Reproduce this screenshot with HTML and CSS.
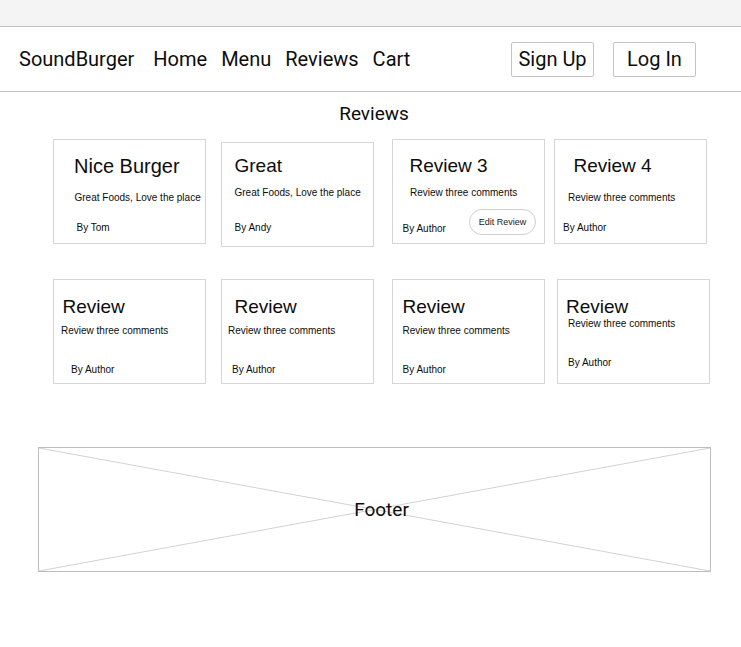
FILE: index.html
```html
<!DOCTYPE html>
<html lang="en">
<head>
<meta charset="utf-8">
<title>SoundBurger - Reviews</title>
<link rel="stylesheet" href="styles.css">
</head>
<body>
<div class="topbar"></div>
<header class="nav">
  <a class="brand" href="#">SoundBurger</a>
  <nav class="links">
    <a href="#">Home</a>
    <a href="#">Menu</a>
    <a href="#">Reviews</a>
    <a href="#">Cart</a>
  </nav>
  <div class="auth">
    <button class="btn">Sign Up</button>
    <button class="btn">Log In</button>
  </div>
</header>
<main>
  <h1 class="page-title">Reviews</h1>
  <section class="grid">
    <article class="card r1c1">
      <h2 class="card-title">Nice Burger</h2>
      <p class="card-text">Great Foods, Love the place</p>
      <div class="card-foot"><span>By Tom</span></div>
    </article>
    <article class="card r1c2">
      <h2 class="card-title">Great</h2>
      <p class="card-text">Great Foods, Love the place</p>
      <div class="card-foot"><span>By Andy</span></div>
    </article>
    <article class="card r1c3">
      <h2 class="card-title">Review 3</h2>
      <p class="card-text">Review three comments</p>
      <div class="card-foot"><span>By Author</span><button class="edit-btn">Edit Review</button></div>
    </article>
    <article class="card r1c4">
      <h2 class="card-title">Review 4</h2>
      <p class="card-text">Review three comments</p>
      <div class="card-foot"><span>By Author</span></div>
    </article>
    <article class="card r2c1">
      <h2 class="card-title">Review</h2>
      <p class="card-text">Review three comments</p>
      <div class="card-foot"><span>By Author</span></div>
    </article>
    <article class="card r2c2">
      <h2 class="card-title">Review</h2>
      <p class="card-text">Review three comments</p>
      <div class="card-foot"><span>By Author</span></div>
    </article>
    <article class="card r2c3">
      <h2 class="card-title">Review</h2>
      <p class="card-text">Review three comments</p>
      <div class="card-foot"><span>By Author</span></div>
    </article>
    <article class="card r2c4">
      <h2 class="card-title">Review</h2>
      <p class="card-text">Review three comments</p>
      <div class="card-foot"><span>By Author</span></div>
    </article>
  </section>
  <footer class="footer">
    <svg class="footer-x" viewBox="0 0 100 100" preserveAspectRatio="none" aria-hidden="true">
      <line x1="0" y1="0" x2="100" y2="100" vector-effect="non-scaling-stroke"/>
      <line x1="100" y1="0" x2="0" y2="100" vector-effect="non-scaling-stroke"/>
    </svg>
    <span class="footer-label">Footer</span>
  </footer>
</main>
</body>
</html>
```
FILE: styles.css
```css
body {
  margin: 0;
  font-family: Roboto, "Liberation Sans", sans-serif;
  color: #0d0d0d;
  background: #fff;
}

.topbar {
  height: 26px;
  background: #f4f4f4;
  border-bottom: 1px solid #c4c4c4;
}

.nav {
  height: 64px;
  display: flex;
  align-items: center;
  padding: 0 45px 0 19px;
  border-bottom: 1px solid #c4c4c4;
  font-size: 20px;
}

.brand,
.links a {
  color: inherit;
  text-decoration: none;
}

.brand {
  margin-right: 19px;
}

.links {
  display: flex;
  gap: 14px;
}

.auth {
  margin-left: auto;
  display: flex;
  gap: 19px;
}

.btn {
  width: 83px;
  height: 35px;
  padding: 0;
  font-family: Roboto, "Liberation Sans", sans-serif;
  font-size: 20px;
  color: #0d0d0d;
  background: #fff;
  border: 1px solid #c4c4c4;
  border-radius: 2px;
}

.page-title {
  margin: 10.5px 0 0;
  padding-left: 7px;
  font-size: 19px;
  line-height: 22px;
  font-weight: 400;
  text-align: center;
}

.grid {
  display: grid;
  grid-template-columns: 168px 171px 165px 153px;
  grid-auto-rows: 105px;
  row-gap: 35px;
  margin: 14.5px 0 0 53px;
  font-family: "Liberation Sans", Arial, sans-serif;
}

.card {
  width: 153px;
  height: 105px;
  box-sizing: border-box;
  border: 1px solid #d6d6d6;
  display: flex;
  flex-direction: column;
  background: #fff;
}

.card-title {
  margin: var(--tt) 0 0 var(--tx);
  font-size: var(--tf, 19px);
  line-height: 24px;
  font-weight: 400;
}

.card-text {
  margin: var(--bt) 0 0 var(--bx);
  font-size: 10px;
  line-height: 12px;
}

.card-foot {
  margin: auto 8px var(--ab) var(--ax);
  display: flex;
  align-items: flex-end;
  justify-content: space-between;
  font-size: 10px;
  line-height: 12px;
}

.edit-btn {
  width: 67px;
  height: 26px;
  padding: 0;
  font-family: "Liberation Sans", Arial, sans-serif;
  font-size: 9px;
  color: #222;
  background: #fff;
  border: 1px solid #cfcfcf;
  border-radius: 13px;
}

.r1c1 { --tf: 20px; --tt: 14px; --tx: 20px; --bt: 13.5px; --bx: 20.5px; --ax: 22.5px; --ab: 9.5px; }
.r1c2 { margin-top: 3px; --tt: 11px; --tx: 12.5px; --bt: 8.5px; --bx: 12.5px; --ax: 12.5px; --ab: 12.5px; }
.r1c3 { --tt: 14px; --tx: 16.5px; --bt: 8.5px; --bx: 17px; --ax: 9.5px; --ab: 8px; }
.r1c4 { margin-left: -3px; --tt: 14px; --tx: 18.5px; --bt: 13.5px; --bx: 13px; --ax: 8px; --ab: 9.5px; }
.r2c1 { --tt: 15px; --tx: 8.5px; --bt: 5.5px; --bx: 7px; --ax: 17px; --ab: 7px; }
.r2c2 { --tt: 15px; --tx: 12.5px; --bt: 5.5px; --bx: 6px; --ax: 10px; --ab: 7px; }
.r2c3 { --tt: 15px; --tx: 9.5px; --bt: 5.5px; --bx: 9.5px; --ax: 9.5px; --ab: 7px; }
.r2c4 { --tt: 15px; --tx: 8px; --bt: -1.2px; --bx: 10px; --ax: 10px; --ab: 14px; }

.footer {
  position: relative;
  box-sizing: border-box;
  width: 673px;
  height: 125px;
  margin: 63px 0 0 38px;
  border: 1px solid #bdbdbd;
  display: flex;
  align-items: center;
  justify-content: center;
  padding-left: 14px;
}

.footer-x {
  position: absolute;
  inset: 0;
  width: 100%;
  height: 100%;
}

.footer-x line {
  stroke: #d2d2d2;
  stroke-width: 1;
}

.footer-label {
  position: relative;
  font-size: 19px;
  line-height: 22px;
}
```
